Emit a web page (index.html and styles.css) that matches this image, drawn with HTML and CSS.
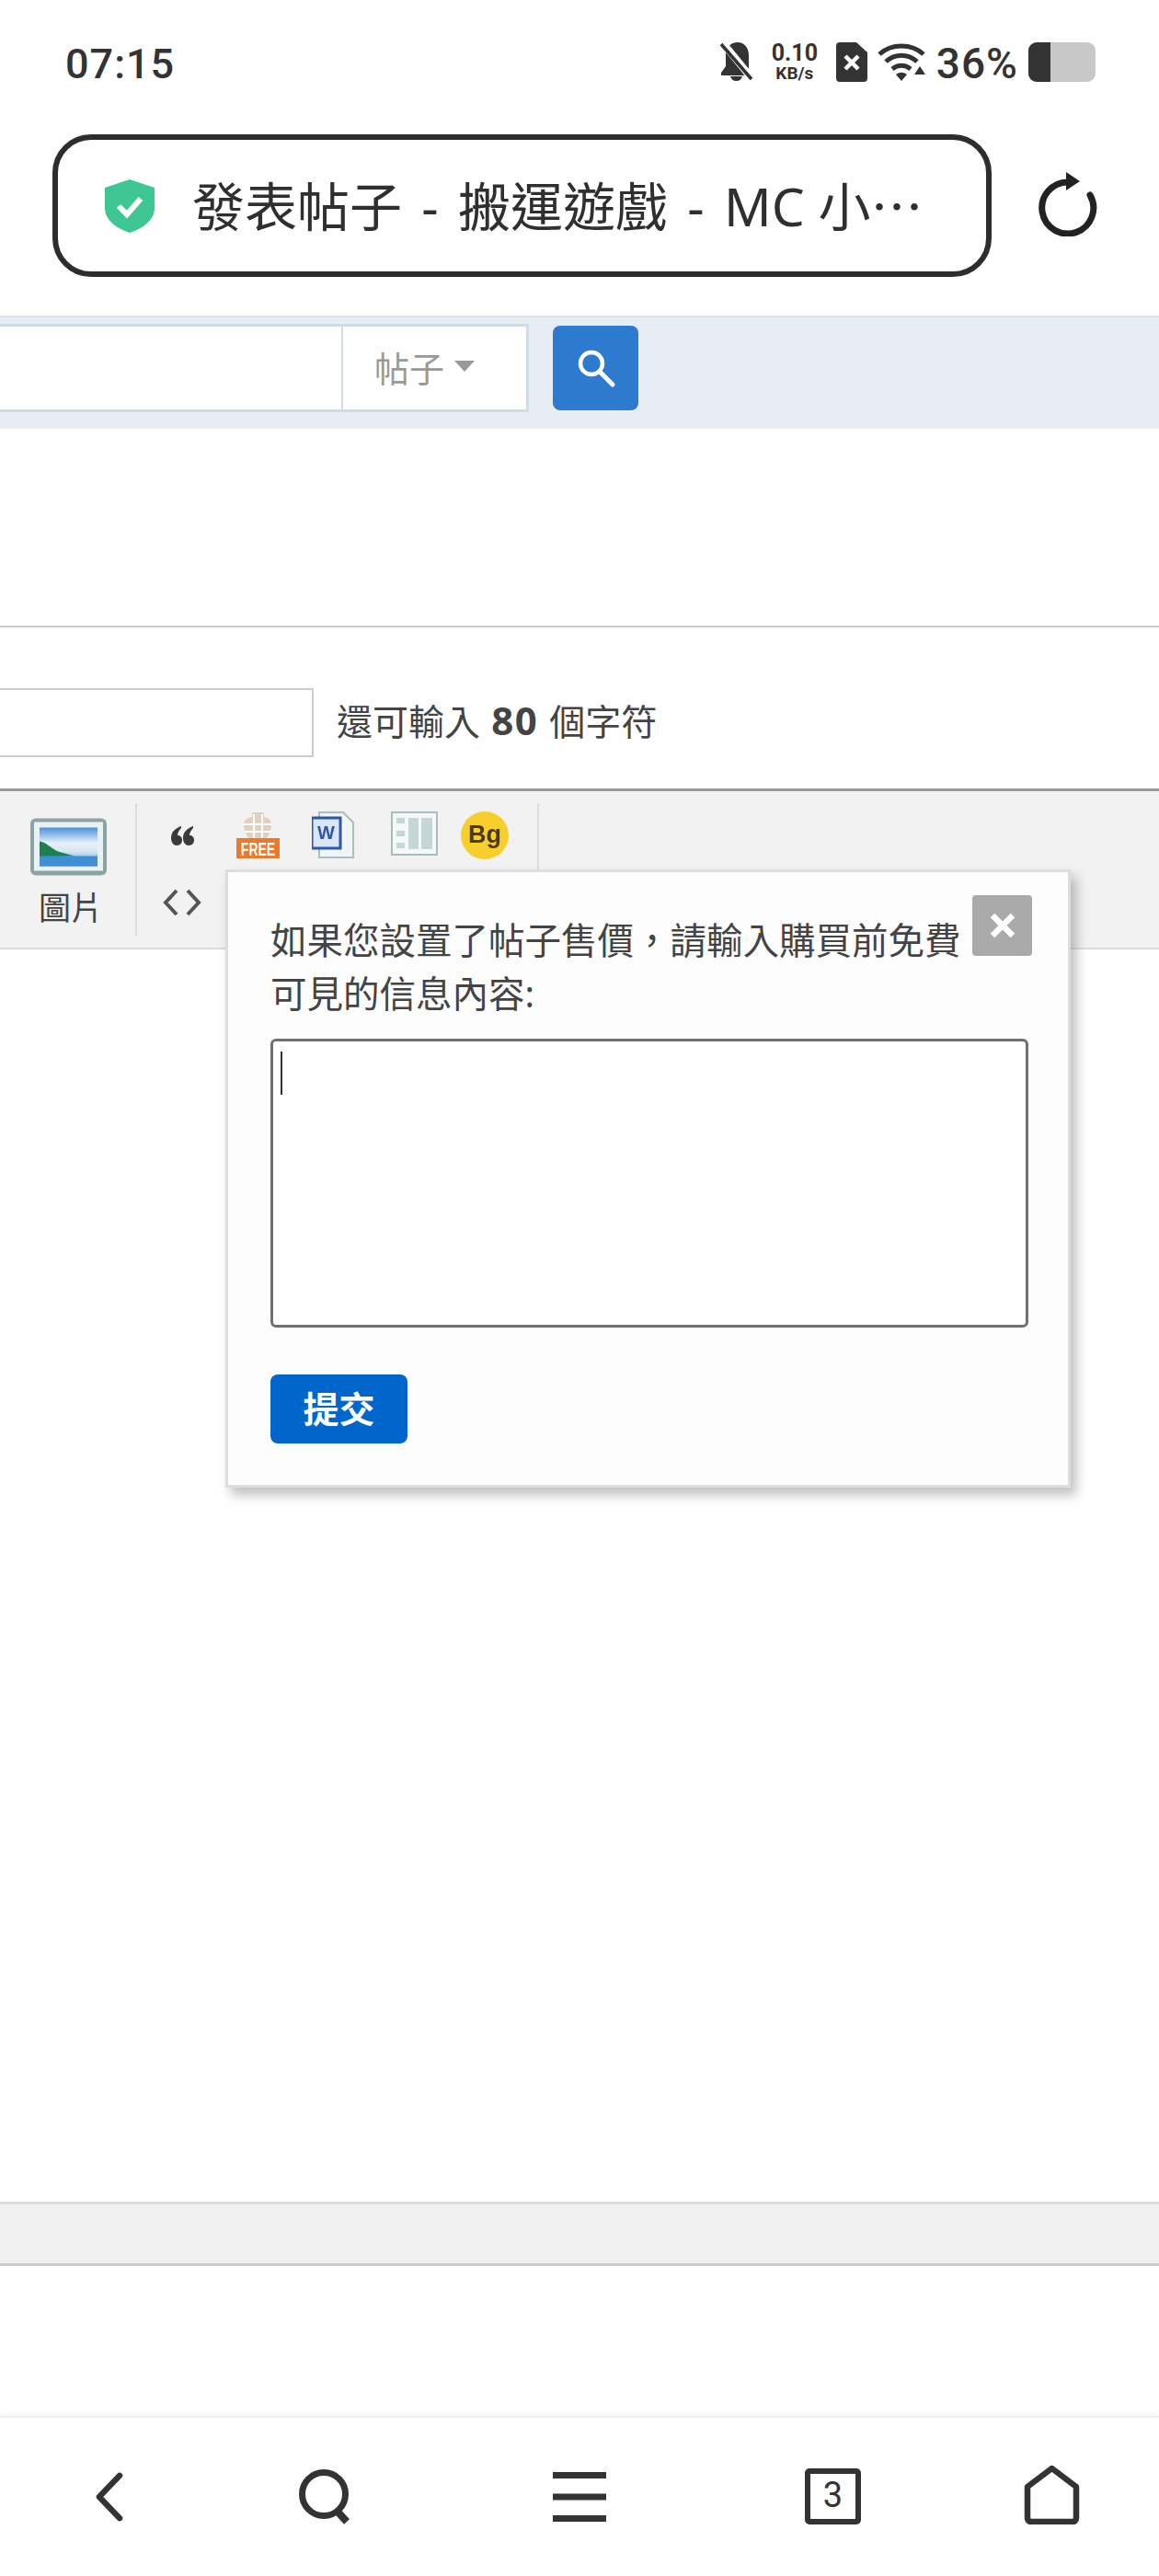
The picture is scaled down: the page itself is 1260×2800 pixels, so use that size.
FILE: index.html
```html
<!DOCTYPE html>
<html lang="zh-Hant">
<head>
<meta charset="utf-8">
<title>發表帖子</title>
<link rel="stylesheet" href="styles.css">
</head>
<body>
<div class="screen">
  <header class="status">
    <span class="time">07:15</span>
    <div class="status-right">
      <svg class="ic-bell" viewBox="0 0 39 42"><path d="M20 0c-8 0-13 6-13 14v12l-5 7v3h30V14C32 6 27 0 20 0z" fill="#333"/><path d="M4 1l32 39" stroke="#fff" stroke-width="8"/><path d="M2 2l33 38" stroke="#333" stroke-width="3.500"/><path d="M12 37h13c-1 3-3 5-6.500 5S13 40 12 37z" fill="#333"/></svg>
      <div class="speed"><span class="speed-num">0.10</span><span class="speed-unit">KB/s</span></div>
      <svg class="ic-sim" viewBox="0 0 34 43"><path d="M4 0h18l12 11v28a4 4 0 0 1-4 4H4a4 4 0 0 1-4-4V4a4 4 0 0 1 4-4z" fill="#333"/><path d="M10 15l14 14M24 15L10 29" stroke="#fff" stroke-width="4.500"/></svg>
      <svg class="ic-wifi" viewBox="0 0 52 42"><g fill="none" stroke="#333" stroke-width="5"><path d="M2 13C15 1 37 1 50 13"/><path d="M9 21c10-9 24-9 34 0"/><path d="M16 29c6-5 14-5 20 0"/></g><path d="M20 35c4-3 8-3 12 0l-6 7z" fill="#333"/><path d="M46 26l6 9H40z" fill="#333"/></svg>
      <span class="pct">36%</span>
      <div class="battery"><span class="battery-level"></span></div>
    </div>
  </header>

  <div class="urlrow">
    <div class="urlbar">
      <svg class="ic-shield" viewBox="0 0 54 58"><path d="M27 0l27 9v22c0 13-12 22-27 27C12 53 0 44 0 31V9z" fill="#3ec795"/><path d="M15 29l9 9 15-17" fill="none" stroke="#fff" stroke-width="6"/></svg>
      <span class="urltext">發表帖子 - 搬運遊戲 - <span class="urltail">MC 小⋯</span></span>
    </div>
    <svg class="ic-reload" viewBox="0 0 66 70"><path d="M33 11a28 28 0 1 0 24 14" fill="none" stroke="#222" stroke-width="7" stroke-linecap="round"/><path d="M31 0l15 10-15 10z" fill="#222"/></svg>
  </div>

  <section class="searchband">
    <div class="searchbox">
      <div class="searchinput"></div>
      <div class="searchtype">帖子<span class="caret"></span></div>
    </div>
    <button class="searchbtn" type="button">
      <svg viewBox="0 0 44 44" class="ic-search"><circle cx="17" cy="17" r="12" fill="none" stroke="#fff" stroke-width="4.500"/><path d="M26 26l14 14" stroke="#fff" stroke-width="5" stroke-linecap="round"/></svg>
    </button>
  </section>

  <div class="gap-top"></div>

  <section class="subject">
    <div class="subject-input"></div>
    <span class="subject-hint">還可輸入 <b>80</b> 個字符</span>
  </section>

  <section class="toolbar">
    <div class="tool-image">
      <svg class="ic-image" viewBox="0 0 85 64">
        <defs>
          <linearGradient id="sky" x1="0" y1="0" x2="0" y2="1"><stop offset="0" stop-color="#4a8edb"/><stop offset=".4" stop-color="#e6f0f9"/><stop offset=".62" stop-color="#d5e6f2"/><stop offset="1" stop-color="#3c8fd0"/></linearGradient>
        </defs>
        <rect x="1" y="1" width="83" height="62" rx="6" fill="#8ba3a3"/>
        <rect x="5" y="5" width="75" height="53" fill="#e8f2f6"/>
        <rect x="11" y="11" width="63" height="42" fill="url(#sky)"/>
        <path d="M11 26c7 1 12 7 20 11l18 5-38 1z" fill="#1d7f52"/>
        <path d="M11 42h63v11H11z" fill="#3f8fd4"/>
      </svg>
      <span class="tool-label">圖片</span>
    </div>
    <div class="tool-group">
      <div class="tool-col">
        <span class="tool-cell"><svg class="ic-quote" viewBox="0 0 25 21"><path d="M11 0C5 2 0 6 0 13c0 4 2 8 6 8s6-3 6-6-2-5-5-5c0-3 2-6 4-8zM24 0c-6 2-11 6-11 13 0 4 2 8 6 8s6-3 6-6-2-5-5-5c0-3 2-6 4-8z" fill="#3a3a3a"/></svg></span>
        <span class="tool-cell"><svg class="ic-code" viewBox="0 0 42 30"><path d="M15 2L3 15l12 13M27 2l12 13-12 13" fill="none" stroke="#555" stroke-width="4"/></svg></span>
      </div>
      <div class="tool-row">
        <svg class="ic-free" viewBox="0 0 47 51">
          <path d="M17 1h13v5c6 1 8 4 8 8 0 7-3 12-5 15H14c-3-3-6-8-6-14 0-5 3-8 9-9z" fill="#e4cfbd"/>
          <path d="M19 3v26M28 3v26M8 14h31M9 22h29" stroke="#fff" stroke-width="2.200"/>
          <rect y="29" width="47" height="22" fill="#ea7a2c"/>
          <text transform="translate(23.500 48) scale(1 1.450)" class="free-text">FREE</text>
        </svg>
        <svg class="ic-word" viewBox="0 0 46 51">
          <path d="M8 1h26l11 11v38H8z" fill="#f0f6f8" stroke="#a9bfc0" stroke-width="2"/>
          <rect x="0" y="7" width="31" height="33" fill="#dbe7f7" stroke="#2f55ad" stroke-width="3"/>
          <text x="15.500" y="30" class="word-text">W</text>
        </svg>
        <svg class="ic-table" viewBox="0 0 51 48">
          <rect x="1" y="1" width="49" height="46" fill="#f4f8f8" stroke="#a9bdbd" stroke-width="2"/>
          <rect x="6" y="7" width="9" height="6" fill="#c4d6d6"/><rect x="6" y="21" width="9" height="6" fill="#c4d6d6"/><rect x="6" y="34" width="9" height="6" fill="#c4d6d6"/>
          <rect x="19" y="7" width="11" height="34" fill="#c4d6d6"/><rect x="33" y="7" width="12" height="34" fill="#c4d6d6"/>
        </svg>
        <svg class="ic-bg" viewBox="0 0 52 52">
          <circle cx="26" cy="26" r="26" fill="#f6cf2f"/>
          <text x="26" y="34" class="bg-text">Bg</text>
        </svg>
      </div>
    </div>
  </section>

  <div class="content"></div>
  <div class="lowerband"></div>
  <div class="gap-bottom"></div>

  <nav class="navbar">
    <svg class="ic-back" viewBox="0 0 32 54"><path d="M28 3L5 27l23 24" fill="none" stroke="#333" stroke-width="6.500" stroke-linecap="round" stroke-linejoin="round"/></svg>
    <svg class="ic-find" viewBox="0 0 58 60"><circle cx="27" cy="27" r="23.500" fill="none" stroke="#333" stroke-width="7"/><path d="M42 46l10 11" stroke="#333" stroke-width="8"/></svg>
    <svg class="ic-menu" viewBox="0 0 58 54"><path d="M0 3.500h58M0 27h58M0 50.500h58" stroke="#333" stroke-width="7"/></svg>
    <div class="tabs">3</div>
    <svg class="ic-home" viewBox="0 0 61 65"><path d="M30.500 4L4 24v34a4 4 0 0 0 4 4h45a4 4 0 0 0 4-4V24z" fill="none" stroke="#333" stroke-width="6.500" stroke-linejoin="round"/></svg>
  </nav>

  <div class="dialog">
    <button class="dialog-close" type="button"><svg class="ic-close" viewBox="0 0 30 30"><path d="M4 4l22 22M26 4L4 26" stroke="#fff" stroke-width="6.500"/></svg></button>
    <p class="dialog-text">如果您設置了帖子售價&#xFF0C;請輸入購買前免費可見的信息內容:</p>
    <div class="dialog-area"><span class="cursor"></span></div>
    <button class="dialog-submit" type="button">提交</button>
  </div>
</div>
</body>
</html>
```

FILE: styles.css
```css
* { box-sizing: border-box; }
html, body { margin: 0; padding: 0; background: #fff; }
body { font-family: "Noto Sans", "Noto Sans CJK TC", sans-serif; color: #333; }
.screen { position: relative; width: 1260px; height: 2800px; overflow: hidden; display: flex; flex-direction: column; background: #fff; }

/* status bar */
.status { height: 146px; flex: none; padding: 46px 69px 0 71px; display: flex; justify-content: space-between; align-items: flex-start; }
.time { font-size: 45px; font-weight: 500; line-height: 48px; color: #333; font-family: "Roboto", sans-serif; letter-spacing: 1px; }
.status-right { display: flex; align-items: flex-start; height: 43px; }
.ic-bell { width: 39px; height: 42px; margin-right: 18px; }
.speed { width: 50px; margin-right: 20px; display: flex; flex-direction: column; align-items: center; color: #333; font-family: "Roboto", sans-serif; font-weight: 700; }
.speed-num { font-size: 25px; line-height: 24px; }
.speed-unit { font-size: 19px; line-height: 20px; }
.ic-sim { width: 34px; height: 43px; margin-right: 11px; }
.ic-wifi { width: 52px; height: 42px; margin-right: 12px; }
.pct { font-family: "Roboto", sans-serif; font-size: 46px; line-height: 46px; font-weight: 500; letter-spacing: 1px; margin-right: 11px; color: #333; }
.battery { position: relative; width: 73px; height: 43px; background: #c8c8c8; border-radius: 9px; overflow: hidden; display: flex; }
.battery-level { width: 24px; height: 100%; background: #333; }

/* url row */
.urlrow { height: 197px; flex: none; display: flex; align-items: flex-start; padding-left: 57px; }
.urlbar { width: 1021px; height: 155px; border: 6px solid #2d2d2d; border-radius: 42px; display: flex; align-items: center; padding-left: 51px; }
.ic-shield { width: 54px; height: 58px; flex: none; margin-right: 41px; }
.urltext { font-size: 57px; line-height: 70px; color: #2f2f2f; white-space: nowrap; word-spacing: 6.500px; }
.urltail { word-spacing: 0; }
.ic-reload { width: 66px; height: 70px; margin: 41px 0 0 50px; flex: none; }

/* search band */
.searchband { height: 123px; flex: none; background: #e6edf4; border-top: 2px solid #dde4e9; display: flex; align-items: flex-start; padding-top: 7px; }
.searchbox { width: 575px; height: 96px; background: #fff; border: 3px solid #cddde4; border-left: 0; display: flex; }
.searchinput { flex: 1; }
.searchtype { width: 201px; border-left: 2px solid #cddde4; padding-left: 34px; font-size: 38px; line-height: 86px; color: #999; display: flex; align-items: center; }
.caret { width: 0; height: 0; border-left: 11px solid transparent; border-right: 11px solid transparent; border-top: 12px solid #999; margin: -4px 0 0 11px; }
.searchbtn { width: 93px; height: 92px; margin: 2px 0 0 26px; padding: 0; border: 0; border-radius: 8px; background: #2d7acf; display: flex; align-items: center; justify-content: center; }
.ic-search { width: 44px; height: 44px; }

.gap-top { height: 214px; flex: none; }

/* subject */
.subject { height: 177px; flex: none; border-top: 2px solid #ccc; padding-top: 66px; display: flex; align-items: flex-start; }
.subject-input { width: 341px; height: 75px; background: #fff; border: 2px solid #ccc; border-left: 0; }
.subject-hint { margin-left: 25px; font-size: 39px; line-height: 70px; color: #444; word-spacing: 2px; }
.subject-hint b { font-weight: 700; font-size: 42px; letter-spacing: 1.500px; }

/* toolbar */
.toolbar { height: 175px; flex: none; background: #f2f2f2; border-top: 3px solid #999; border-bottom: 2px solid #ddd; display: flex; padding-top: 13px; }
.tool-image { width: 149px; height: 144px; border-right: 2px solid #ddd; display: flex; flex-direction: column; padding: 15px 0 0 32px; }
.ic-image { width: 85px; height: 65px; filter: blur(.7px); }
.tool-label { font-size: 35px; line-height: 48px; margin: 10px 0 0 10px; color: #444; }
.tool-group { width: 437px; height: 144px; border-right: 2px solid #ddd; display: flex; }
.tool-col { width: 106px; padding-left: 28px; display: flex; flex-direction: column; }
.tool-cell { width: 42px; display: flex; justify-content: center; }
.ic-quote { width: 25px; height: 21px; margin-top: 25px; filter: blur(.6px); }
.ic-code { width: 42px; height: 30px; margin-top: 47px; filter: blur(.7px); }
.tool-row { display: flex; align-items: flex-start; padding-top: 9px; }
.tool-row svg { filter: blur(.6px); flex: none; }
.ic-free { width: 47px; height: 51px; margin: 0 35px 0 2px; }
.ic-word { width: 46px; height: 51px; margin-right: 40px; }
.ic-table { width: 51px; height: 48px; margin-right: 25px; }
.ic-bg { width: 52px; height: 52px; }
.free-text { font: 700 14px "Liberation Sans", sans-serif; fill: #fff; text-anchor: middle; }
.word-text { font: 700 20px "Liberation Sans", sans-serif; fill: #2f55ad; text-anchor: middle; }
.bg-text { font: 700 27px "Liberation Sans", sans-serif; fill: #4a3a10; text-anchor: middle; }

.content { height: 1361px; flex: none; }
.lowerband { height: 70px; flex: none; background: #f1f1f1; border-top: 3px solid #ddd; border-bottom: 3px solid #ccc; }
.gap-bottom { height: 163px; flex: none; }

/* nav */
.navbar { position: relative; flex: 1; border-top: 2px solid #eee; box-shadow: 0 -3px 4px #f6f6f6; background: #fff; display: grid; grid-template-columns: 103px 31px 191px 58px 218px 58px 216px 61px 177px 61px; padding-top: 51px; align-items: start; }
.ic-back { grid-column: 2; width: 31px; height: 54px; margin-top: 8px; }
.ic-find { grid-column: 4; width: 58px; height: 60px; margin-top: 5px; }
.ic-menu { grid-column: 6; width: 58px; height: 54px; margin-top: 8px; }
.tabs { grid-column: 8; width: 61px; height: 61px; margin-top: 4px; border: 6.500px solid #333; border-radius: 5px; font-size: 38px; line-height: 47px; text-align: center; color: #333; font-family: "Roboto", sans-serif; }
.ic-home { grid-column: 10; width: 61px; height: 65px; }

/* dialog overlay */
.dialog { position: absolute; left: 245px; top: 945px; width: 919px; height: 672px; background: #fdfdfd; border: 3px solid #ddd; box-shadow: 6px 8px 12px rgba(0, 0, 0, .25); padding: 45px 46px 0 46px; }
.dialog-close { position: absolute; top: 25px; right: 39px; width: 65px; height: 66px; padding: 0; border: 0; border-radius: 4px; background: #aaa; display: flex; align-items: center; justify-content: center; }
.ic-close { width: 30px; height: 30px; }
.dialog-text { margin: 0; width: 760px; font-size: 39.500px; line-height: 58px; color: #444; }
.dialog-area { width: 824px; height: 314px; margin-top: 20px; border: 3px solid #707070; border-radius: 6px; background: #fff; padding: 11px 0 0 8px; }
.cursor { display: block; width: 2px; height: 47px; background: #333; }
.dialog-submit { display: block; width: 149px; height: 75px; margin-top: 51px; padding: 0 0 6px; border: 0; border-radius: 8px; background: #0066cc; color: #fff; font: 700 39px "Noto Sans CJK TC", sans-serif; }
```
